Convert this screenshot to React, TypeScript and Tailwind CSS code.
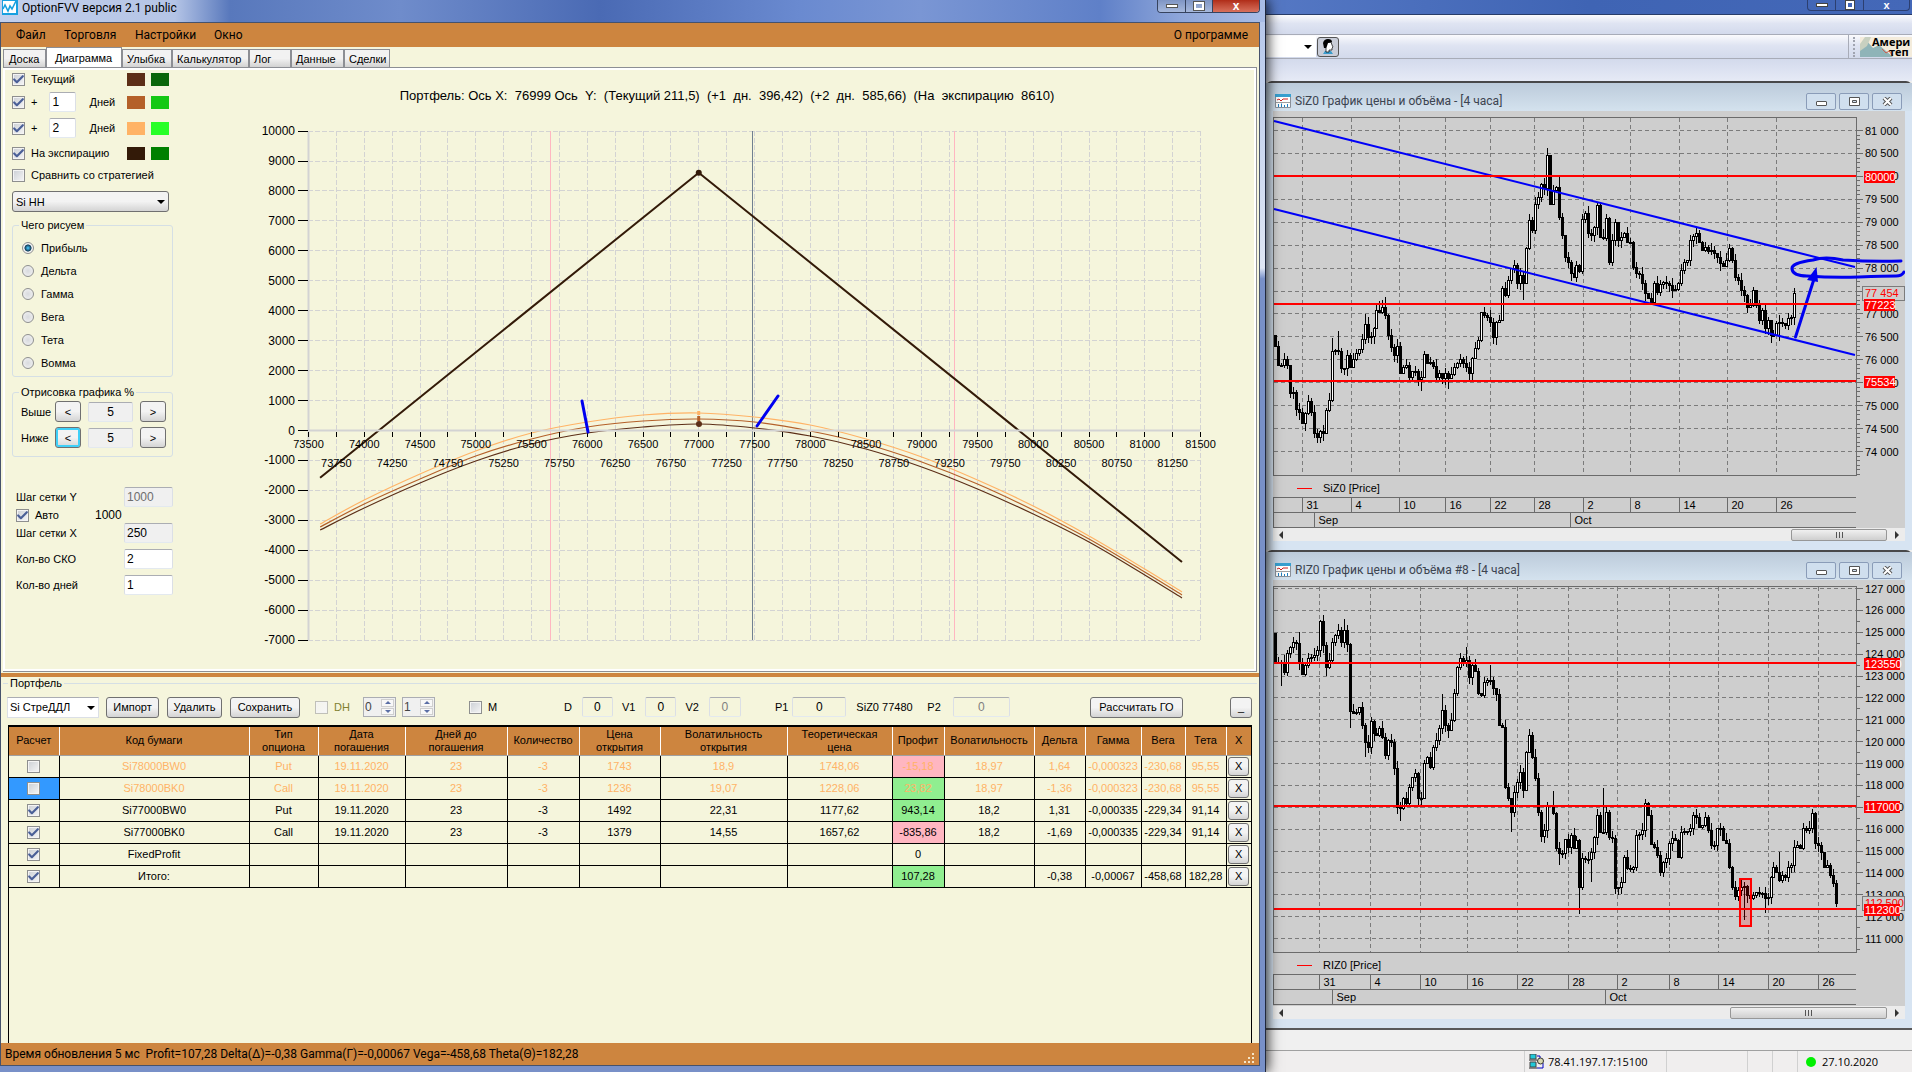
import { Check } from 'lucide-react';
import clsx from 'clsx';

const beige = 'bg-[#f5f5dc]';
const winButton =
  'border border-[#707070] rounded-[3px] bg-linear-to-b from-[#f3f3f3] from-50% to-[#d4d4d4] flex items-center justify-center';
const field = 'border border-t-[#abadb3] border-x-[#dbdfe6] border-b-[#e3e9ef] rounded-[2px] h-5 min-w-0';

/* ---------- small controls ---------- */

interface TickProps {
  label: string;
  checked?: boolean;
  disabled?: boolean;
  hideLabel?: boolean;
  className?: string;
}

function Tick({ label, checked = false, disabled = false, hideLabel = false, className }: TickProps) {
  return (
    <label className={clsx('flex items-center gap-1.5 whitespace-nowrap', className)}>
      <span className="relative block w-[13px] h-[13px] shrink-0">
        <input
          type="checkbox"
          aria-label={hideLabel ? label : undefined}
          defaultChecked={checked}
          disabled={disabled}
          className="peer block appearance-none w-[13px] h-[13px] border border-[#8e8f8f] bg-linear-to-br from-[#cbcfd5] to-[#f6f6f6] disabled:border-[#c0c0b8] disabled:from-[#f4f4ea] shadow-[inset_0_0_0_1px_#f4f4f4]"
        />
        <Check className="hidden peer-checked:block absolute inset-0 w-[13px] h-[13px] text-[#4a5f97] pointer-events-none" strokeWidth={4} />
      </span>
      {!hideLabel && <span>{label}</span>}
    </label>
  );
}

function Swatches({ a, b }: { a: string; b: string }) {
  return (
    <span className="ml-auto flex gap-1.5">
      <span className={clsx('w-[18px] h-[13px]', a)} />
      <span className={clsx('w-[18px] h-[13px]', b)} />
    </span>
  );
}

function Arrow({ className }: { className?: string }) {
  return (
    <svg viewBox="0 0 8 4" className={clsx('w-2 h-1 pointer-events-none', className)}>
      <path d="M0 0h8L4 4z" fill="currentColor" />
    </svg>
  );
}

function Spin({ value, label }: { value: string; label: string }) {
  return (
    <div className="flex w-[33px] h-5 border border-[#abadb3] bg-[#f0f0f0]">
      <input aria-label={label} defaultValue={value} className="w-4 pl-px bg-transparent text-xs text-[#444]" />
      <div className="flex flex-col flex-1 gap-px p-px">
        <button type="button" aria-label="+" className="flex-1 flex items-center justify-center bg-[#f8f8f8] border border-[#cfcfcf]">
          <Arrow className="w-1.5 h-[3px] rotate-180 text-[#5a6ea5]" />
        </button>
        <button type="button" aria-label="-" className="flex-1 flex items-center justify-center bg-[#f8f8f8] border border-[#cfcfcf]">
          <Arrow className="w-1.5 h-[3px] text-[#5a6ea5]" />
        </button>
      </div>
    </div>
  );
}

/* ---------- profit diagram ---------- */

const px = (price: number) => 128.5 + (price - 73500) * 0.1115;
const py = (value: number) => 360.5 - value * 0.02994;

const curveX = [73604, 74000, 74500, 75000, 75500, 76000, 76500, 77000, 77500, 78000, 78500, 79000, 79500, 80000, 80500, 81000, 81334];
const curves = [
  { color: '#ffb366', ys: [454, 430, 404, 381, 363, 352, 345, 343, 347, 355, 369, 387, 410, 436, 466, 499, 522] },
  { color: '#b46029', ys: [457, 434, 409, 386, 369, 357, 351, 349, 352, 361, 374, 392, 414, 440, 469, 502, 525] },
  { color: '#5c2e17', ys: [460, 438, 413, 391, 374, 363, 357, 354, 358, 366, 379, 397, 419, 444, 472, 505, 528] },
];

function smooth(ys: number[]) {
  const p = curveX.map((x, i) => [px(x), ys[i]]);
  let d = `M${p[0][0]} ${p[0][1]}`;
  for (let i = 0; i < p.length - 1; i++) {
    const a = p[Math.max(i - 1, 0)];
    const b = p[i];
    const c = p[i + 1];
    const e = p[Math.min(i + 2, p.length - 1)];
    d += ` C${b[0] + (c[0] - a[0]) / 6} ${b[1] + (c[1] - a[1]) / 6} ${c[0] - (e[0] - b[0]) / 6} ${c[1] - (e[1] - b[1]) / 6} ${c[0]} ${c[1]}`;
  }
  return d;
}

function ProfitDiagram() {
  const prices = Array.from({ length: 33 }, (_, i) => 73500 + i * 250);
  const values = Array.from({ length: 18 }, (_, i) => 10000 - i * 1000);

  return (
    <svg viewBox="0 0 1074 599" className="flex-1 min-w-0 self-start font-['Liberation_Sans',sans-serif]">
      <text x="547" y="30" fontSize="13" textAnchor="middle" className="whitespace-pre">
        {'Портфель: Ось X:  76999 Ось  Y:  (Текущий 211,5)  (+1  дн.  396,42)  (+2  дн.  585,66)  (На  экспирацию  8610)'}
      </text>
      <g stroke="#d3d3d3" strokeDasharray="5 2" shapeRendering="crispEdges">
        {prices.map((p) => (
          <path key={p} d={`M${px(p)} 61V570`} />
        ))}
        {values.map((v) => (
          <path key={v} d={`M128 ${py(v)}H1020`} />
        ))}
      </g>
      <path d="M370.5 61V570M774.5 61V570" stroke="#ffb6c1" shapeRendering="crispEdges" />
      <path d="M572.5 61V570" stroke="#708090" shapeRendering="crispEdges" />
      {curves.map((c) => (
        <path key={c.color} d={smooth(c.ys)} fill="none" stroke={c.color} strokeWidth="1.2" />
      ))}
      <path
        d={`M${px(73604)} ${py(-1577)}L${px(77000)} ${py(8610)}L${px(81334)} ${py(-4390)}`}
        fill="none"
        stroke="#331a08"
        strokeWidth="2"
      />
      <path d="M128.5 61V570M128.5 360.5H1020" stroke="#d3d3d3" strokeWidth="2" />
      {values.map((v) => (
        <g key={v}>
          <path d={`M118 ${py(v)}h10`} stroke="#000" shapeRendering="crispEdges" />
          <text x="115" y={py(v) + 4} fontSize="12" textAnchor="end">{v}</text>
        </g>
      ))}
      {prices.map((p, i) => (
        <g key={p}>
          <path d={`M${px(p)} 362v5`} stroke="#000" shapeRendering="crispEdges" />
          <text x={px(p)} y={i % 2 ? 397 : 378} fontSize="11" textAnchor="middle">{p}</text>
        </g>
      ))}
      <circle cx={px(77000)} cy={py(8610)} r="3" fill="#331a08" />
      <path d="M518.7 341v4" stroke="#ffb366" strokeWidth="3" />
      <path d="M518.7 346v5" stroke="#b46029" strokeWidth="3" />
      <circle cx="519" cy="354" r="3" fill="#5c2e17" />
      <path d="M402 331L408 362M577 356L598 326" stroke="#0000f0" strokeWidth="3" strokeLinecap="round" />
    </svg>
  );
}

/* ---------- side panel ---------- */

function Group({ title, children, className }: { title: string; children: React.ReactNode; className?: string }) {
  return (
    <fieldset className={clsx('border border-[#d5dfe5] rounded-[3px] w-[161px]', className)}>
      <legend className="ml-1.5 px-0.5 leading-3">{title}</legend>
      {children}
    </fieldset>
  );
}

function SidePanel() {
  const greeks = ['Прибыль', 'Дельта', 'Гамма', 'Вега', 'Тета', 'Вомма'];

  return (
    <aside className="w-[175px] shrink-0 pl-[7px] flex flex-col">
      <div className="w-[157px] mt-0.5 flex items-center h-[14px]">
        <Tick label="Текущий" checked />
        <Swatches a="bg-[#5c2e17]" b="bg-[#0a660a]" />
      </div>
      <div className="w-[157px] mt-1.5 flex items-center h-5">
        <Tick label="+" checked />
        <input aria-label="Дней 1" defaultValue="1" className={clsx(field, 'w-[27px] ml-3 pl-0.5 bg-white text-xs')} />
        <span className="ml-[13px]">Дней</span>
        <Swatches a="bg-[#b46029]" b="bg-[#14c814]" />
      </div>
      <div className="w-[157px] mt-1.5 flex items-center h-5">
        <Tick label="+" checked />
        <input aria-label="Дней 2" defaultValue="2" className={clsx(field, 'w-[27px] ml-3 pl-0.5 bg-white text-xs')} />
        <span className="ml-[13px]">Дней</span>
        <Swatches a="bg-[#ffb366]" b="bg-[#28ff28]" />
      </div>
      <div className="w-[157px] mt-2 flex items-center h-[14px]">
        <Tick label="На экспирацию" checked />
        <Swatches a="bg-[#331a08]" b="bg-[#008000]" />
      </div>
      <Tick label="Сравнить со стратегией" className="mt-[7px] h-4 mb-2" />

      <div className="relative w-[157px]">
        <select aria-label="Стратегия" className={clsx(winButton, 'appearance-none block w-full h-[21px] pl-[3px]')}>
          <option>Si НН</option>
        </select>
        <Arrow className="absolute right-1 top-[9px]" />
      </div>

      <Group title="Чего рисуем" className="mt-[7px] pb-0.5">
        <div className="pl-[9px] pt-[5px]">
          {greeks.map((name, i) => (
            <label key={name} className="flex items-center gap-[7px] h-[23px]">
              <input
                type="radio"
                name="greek"
                defaultChecked={i === 0}
                className="appearance-none w-3 h-3 rounded-full border border-[#8e8f8f] bg-[radial-gradient(#d8dade,#f4f4f4)] checked:bg-[radial-gradient(#3fb0e0_10%,#123a55_45%,#f4f4f4_55%)]"
              />
              {name}
            </label>
          ))}
        </div>
      </Group>

      <Group title="Отрисовка графика %" className="mt-[9px]">
        {['Выше', 'Ниже'].map((name, i) => (
          <div key={name} className="flex items-center pl-2 pr-1.5 mt-[3px] mb-[5px] h-[21px] last:mb-2">
            <span className="w-[34px]">{name}</span>
            <button
              type="button"
              className={clsx(winButton, 'w-[26px] h-[21px]', i === 1 && 'border-[#2c8ac0] shadow-[inset_0_0_0_2px_#3fd0f8]')}
            >
              &lt;
            </button>
            <input aria-label={name} defaultValue="5" className={clsx(field, 'w-[45px] mx-[7px] text-center text-xs bg-[#f0f0f0]')} />
            <button type="button" className={clsx(winButton, 'w-[26px] h-[21px]')}>&gt;</button>
          </div>
        ))}
      </Group>

      <div className="w-[161px] pl-1 mt-[30px]">
        <label className="flex items-center justify-between h-5">
          Шаг сетки Y
          <input defaultValue="1000" disabled className={clsx(field, 'w-[49px] pl-0.5 text-xs bg-[#f0f0f0] text-[#6d6d6d]')} />
        </label>
        <div className="flex items-center h-4">
          <Tick label="Авто" checked />
          <span className="ml-9 text-xs">1000</span>
        </div>
        <label className="flex items-center justify-between h-5">
          Шаг сетки X
          <input defaultValue="250" className={clsx(field, 'w-[49px] pl-0.5 text-xs bg-[#f0f0f0]')} />
        </label>
        <label className="flex items-center justify-between h-5 mt-1.5">
          Кол-во СКО
          <input defaultValue="2" className={clsx(field, 'w-[49px] pl-0.5 text-xs bg-white')} />
        </label>
        <label className="flex items-center justify-between h-5 mt-1.5">
          Кол-во дней
          <input defaultValue="1" className={clsx(field, 'w-[49px] pl-0.5 text-xs bg-white')} />
        </label>
      </div>
    </aside>
  );
}

/* ---------- portfolio ---------- */

const columns = [
  { title: 'Расчет', width: 'w-[50px]' },
  { title: 'Код бумаги', width: '' },
  { title: 'Тип опциона', width: 'w-[69px]' },
  { title: 'Дата погашения', width: 'w-[87px]' },
  { title: 'Дней до погашения', width: 'w-[102px]' },
  { title: 'Количество', width: 'w-[72px]' },
  { title: 'Цена открытия', width: 'w-[81px]' },
  { title: 'Волатильность открытия', width: 'w-[127px]' },
  { title: 'Теоретическая цена', width: 'w-[105px]' },
  { title: 'Профит', width: 'w-[52px]' },
  { title: 'Волатильность', width: 'w-[90px]' },
  { title: 'Дельта', width: 'w-[51px]' },
  { title: 'Гамма', width: 'w-[56px]' },
  { title: 'Вега', width: 'w-[44px]' },
  { title: 'Тета', width: 'w-[41px]' },
  { title: 'X', width: 'w-[25px]' },
];

const rows = [
  { on: false, profit: 'bg-[#ffb6c1]', cells: ['Si78000BW0', 'Put', '19.11.2020', '23', '-3', '1743', '18,9', '1748,06', '-15,18', '18,97', '1,64', '-0,000323', '-230,68', '95,55'] },
  { on: false, profit: 'bg-[#90ee90]', cells: ['Si78000BK0', 'Call', '19.11.2020', '23', '-3', '1236', '19,07', '1228,06', '23,82', '18,97', '-1,36', '-0,000323', '-230,68', '95,55'] },
  { on: true, profit: 'bg-[#90ee90]', cells: ['Si77000BW0', 'Put', '19.11.2020', '23', '-3', '1492', '22,31', '1177,62', '943,14', '18,2', '1,31', '-0,000335', '-229,34', '91,14'] },
  { on: true, profit: 'bg-[#ffb6c1]', cells: ['Si77000BK0', 'Call', '19.11.2020', '23', '-3', '1379', '14,55', '1657,62', '-835,86', '18,2', '-1,69', '-0,000335', '-229,34', '91,14'] },
  { on: true, profit: '', cells: ['FixedProfit', '', '', '', '', '', '', '', '0', '', '', '', '', ''] },
  { on: true, profit: 'bg-[#90ee90]', cells: ['Итого:', '', '', '', '', '', '', '', '107,28', '', '-0,38', '-0,00067', '-458,68', '182,28'] },
];

function PortfolioTable() {
  return (
    <table className="w-full table-fixed border-collapse text-center">
      <thead>
        <tr className="h-7 bg-[#cd853f]">
          {columns.map((c) => (
            <th key={c.title} className={clsx(c.width, 'font-normal leading-[13px] px-1 border-r border-r-white border-b border-b-[#a0a0a0] last:border-r-0')}>
              {c.title}
            </th>
          ))}
        </tr>
      </thead>
      <tbody>
        {rows.map((row, r) => (
          <tr key={row.cells[0]} className={clsx('h-[22px]', !row.on && 'text-[#ffb366]')}>
            <td className={clsx('border-r border-b border-black', r === 1 && 'bg-[#3399ff]')}>
              <Tick label={`Расчет ${row.cells[0]}`} hideLabel checked={row.on} className="justify-center" />
            </td>
            {row.cells.map((cell, i) => (
              <td key={i} className={clsx('border-r border-b border-black whitespace-nowrap', i === 8 && row.profit)}>
                {cell}
              </td>
            ))}
            <td className="border-b border-black text-black">
              <button type="button" className={clsx(winButton, 'w-[21px] h-[19px] mx-auto')}>X</button>
            </td>
          </tr>
        ))}
      </tbody>
    </table>
  );
}

interface NumBoxProps {
  label: string;
  value: string;
  width: string;
  gap?: string;
  disabled?: boolean;
  className?: string;
}

function NumBox({ label, value, width, gap = 'ml-2.5', disabled = false, className }: NumBoxProps) {
  return (
    <label className={clsx('flex items-center', className)}>
      {label}
      <input
        defaultValue={value}
        disabled={disabled}
        className={clsx(field, width, gap, beige, 'text-center text-xs', disabled && 'border-[#b4b4b4] text-[#808080]')}
      />
    </label>
  );
}

function Portfolio() {
  return (
    <fieldset className="flex-1 flex flex-col min-w-0 mx-0.5 border-t border-[#d5dfe5]">
      <legend className="ml-[5px] px-0.5 leading-3">Портфель</legend>
      <div className="flex items-center h-9 pl-1 pr-[5px] whitespace-nowrap">
        <div className="relative w-[92px]">
          <select aria-label="Портфель" className="appearance-none block w-full h-[21px] pl-0.5 bg-white border border-[#dbdfe6] border-t-[#abadb3]">
            <option>Si СтреДДЛ</option>
          </select>
          <Arrow className="absolute right-1 top-[9px]" />
        </div>
        <button type="button" className={clsx(winButton, 'ml-[7px] w-[53px] h-[21px]')}>Импорт</button>
        <button type="button" className={clsx(winButton, 'ml-2 w-[55px] h-[21px]')}>Удалить</button>
        <button type="button" className={clsx(winButton, 'ml-2 w-[70px] h-[21px]')}>Сохранить</button>
        <Tick label="DH" disabled className="ml-[15px] w-12 text-[#808030]" />
        <Spin label="DH 1" value="0" />
        <span className="w-1.5" />
        <Spin label="DH 2" value="1" />
        <Tick label="M" className="ml-[34px] w-[95px]" />
        <NumBox label="D" value="0" width="w-[31px]" />
        <NumBox label="V1" value="0" width="w-[31px]" className="ml-[9px]" />
        <NumBox label="V2" value="0" width="w-[32px]" disabled className="ml-[9px]" />
        <NumBox label="P1" value="0" width="w-[54px]" gap="ml-1" className="ml-[34px]" />
        <span className="ml-2.5 w-[71px]">SiZ0 77480</span>
        <NumBox label="P2" value="0" width="w-[57px]" disabled gap="ml-3" />
        <button type="button" className={clsx(winButton, 'ml-auto w-[93px] h-[21px]')}>Рассчитать ГО</button>
        <button type="button" className={clsx(winButton, 'ml-[47px] w-[22px] h-[21px]')}>_</button>
      </div>
      <div className="flex-1 mx-[5px] border border-b-0 border-black border-t-2">
        <PortfolioTable />
      </div>
    </fieldset>
  );
}

/* ---------- option window ---------- */

function OptionWindow() {
  const tabs = [
    { name: 'Доска', width: 'w-[43px]' },
    { name: 'Диаграмма', width: 'w-[76px]' },
    { name: 'Улыбка', width: 'w-[50px]' },
    { name: 'Калькулятор', width: 'w-[77px]' },
    { name: 'Лог', width: 'w-[42px]' },
    { name: 'Данные', width: 'w-[53px]' },
    { name: 'Сделки', width: 'w-[46px]' },
  ];

  return (
    <section className="relative z-10 flex flex-col min-w-0 bg-linear-to-b from-[#b4c6ea] via-[#dfe6f4] via-25% to-[#7890c8] to-26% border-r border-[#20283c] shadow-[2px_0_12px_rgba(0,0,0,0.8)]">
      <header className="flex h-[22px] shrink-0 bg-[linear-gradient(90deg,#c3d0ec_0,#b4c4e6_175px,#5878bc_230px,#6f8ccb_400px,#4a6ab4_600px,#6a8ad0_800px,#7a96d4_920px,#5f80c8_1100px,#8ea6da_1180px,#a9bde6)]">
        <svg viewBox="0 0 16 15" className="w-4 h-[15px] ml-0.5">
          <path d="M0 0H15V14H0z" fill="#fff" stroke="#18a0e0" strokeWidth="2" />
          <path d="M1 9l2-4 3 6 2-5 2 3 4-8" fill="none" stroke="#18a0e0" strokeWidth="1.6" />
        </svg>
        <h1 className="ml-1 leading-4 text-xs font-['Roboto',sans-serif]">OptionFVV версия 2.1 public</h1>
        <div className="ml-auto mr-[5px] flex h-[13px] w-[103px] border border-t-0 border-[#36435f] rounded-b-[4px] overflow-hidden">
          <button type="button" aria-label="Свернуть" className="w-7 border-r border-[#36435f] bg-linear-to-b from-[#7f95c4] to-[#a6b8dc] flex items-center justify-center">
            <span className="w-3 h-1 bg-white border border-[#555]" />
          </button>
          <button type="button" aria-label="Развернуть" className="w-[27px] border-r border-[#36435f] bg-linear-to-b from-[#7f95c4] to-[#a6b8dc] flex items-center justify-center">
            <span className="w-2.5 h-2 border-2 border-white outline outline-[#555]" />
          </button>
          <button type="button" aria-label="Закрыть" className="flex-1 bg-linear-to-b from-[#b02c18] to-[#d8705c] text-white text-xs font-bold leading-[10px]">
            x
          </button>
        </div>
      </header>

      <div className={clsx('flex-1 flex flex-col min-w-0 mr-[5px] mb-1.5 border border-[#46526c]', beige)}>
        <nav className="flex items-center h-6 px-[15px] bg-[#cd853f] text-xs font-['Roboto',sans-serif]">
          <button type="button" className="w-12 text-left">Файл</button>
          <button type="button" className="w-[71px] text-left">Торговля</button>
          <button type="button" className="w-[79px] text-left">Настройки</button>
          <button type="button">Окно</button>
          <button type="button" className="ml-auto -mr-1">О программе</button>
        </nav>

        <div className="flex items-end h-5 pl-0.5" role="tablist">
          {tabs.map((t, i) => (
            <button
              key={t.name}
              type="button"
              role="tab"
              aria-selected={i === 1}
              className={clsx(
                t.width,
                'border border-b-0 border-[#8c8e94] text-left',
                i === 0 ? 'pl-[5px]' : i > 1 && 'pl-1',
                i === 1 ? 'h-5 bg-white pl-2' : 'h-[18px] bg-linear-to-b from-[#f2f2f2] from-50% to-[#d2d2d2]'
              )}
            >
              {t.name}
            </button>
          ))}
        </div>
        <div className="mx-0.5 border border-[#8c8e94] border-l-0">
          <div className="flex border-2 border-white">
            <SidePanel />
            <ProfitDiagram />
          </div>
        </div>
        <div className="h-1 mt-px bg-[#cd853f] shrink-0" />
        <Portfolio />
        <footer className="flex items-center h-[22px] px-1 bg-[#cd853f] text-xs font-['Roboto',sans-serif]">
          <span className="whitespace-pre">
            {'Время обновления 5 мс  Profit=107,28 Delta(Δ)=-0,38 Gamma(Γ)=-0,00067 Vega=-458,68 Theta(Θ)=182,28'}
          </span>
          <svg viewBox="0 0 11 11" className="ml-auto mt-2 w-[11px] h-[11px]">
            <path d="M8 0h2v2H8zM4 4h2v2H4zM8 4h2v2H8zM0 8h2v2H0zM4 8h2v2H4zM8 8h2v2H8z" fill="#f5e6c8" />
          </svg>
        </footer>
      </div>
    </section>
  );
}

/* ---------- price charts ---------- */

// closes, in thirds of a pixel, shared vertical origin per instrument (see shift)
const siCloses = [
  1038, 1095, 1096, 1078, 1095, 1180, 1175, 1228, 1235, 1270, 1238, 1202, 1237, 1300, 1312, 1293, 1300, 1231, 1200, 1054, 1050, 1053, 1103,
  1105, 1065, 1100, 1078, 1058, 1047, 1018, 972, 1012, 1008, 983, 930, 935, 922, 945, 1005, 1040, 1065, 1038, 1118, 1100, 1095, 1130, 1112,
  1112, 1138, 1132, 1063, 1090, 1085, 1098, 1132, 1120, 1133, 1120, 1135, 1122, 1100, 1090, 1078, 1090, 1100, 1120, 1075, 1045, 1020, 935,
  945, 950, 965, 1012, 965, 960, 865, 885, 840, 805, 795, 850, 825, 850, 745, 660, 690, 612, 590, 552, 565, 465, 612, 570, 562, 650, 705,
  770, 785, 820, 830, 795, 812, 657, 640, 700, 705, 680, 615, 710, 715, 655, 785, 720, 665, 720, 710, 700, 725, 725, 800, 820, 822, 850,
  880, 895, 905, 850, 875, 852, 845, 850, 855, 870, 868, 850, 810, 785, 780, 720, 708, 700, 725, 750, 742, 752, 750, 760, 770, 790, 798,
  780, 745, 780, 830, 840, 870, 885, 920, 915, 870, 915, 960, 930, 985, 960, 1005, 1005, 970, 965, 970, 975, 955, 952, 880,
];

const riCloses = [
  340, 335, 335, 365, 310, 290, 275, 278, 335, 373, 345, 325, 320, 315, 300, 213, 285, 352, 330, 277, 255, 240, 275, 240, 283, 482, 490,
  487, 472, 525, 575, 590, 513, 550, 555, 535, 560, 615, 570, 575, 655, 770, 775, 745, 760, 710, 680, 670, 745, 745, 640, 620, 650, 590,
  570, 535, 480, 525, 540, 510, 430, 350, 325, 335, 330, 382, 345, 362, 430, 435, 395, 390, 390, 415, 432, 525, 530, 710, 745, 785, 725,
  695, 665, 720, 605, 555, 620, 683, 785, 858, 840, 765, 765, 790, 895, 910, 910, 868, 890, 855, 895, 870, 1010, 925, 928, 927, 905, 860,
  795, 845, 847, 785, 860, 865, 1015, 1010, 995, 920, 955, 958, 950, 855, 852, 840, 758, 795, 883, 890, 915, 965, 935, 925, 880, 865, 870,
  920, 845, 842, 842, 835, 795, 800, 832, 825, 800, 840, 885, 885, 835, 835, 870, 880, 950, 1010, 1038, 1020, 1012, 1008, 1035, 1045, 1035,
  1025, 1030, 1030, 1045, 1040, 980, 950, 965, 990, 975, 980, 950, 945, 890, 885, 895, 835, 840, 835, 790, 880, 885, 905, 950, 945, 975,
  1000, 1060,
];

interface CandlesProps {
  closes: number[];
  first: number;
  shift: number;
  lows?: Record<number, number>;
  highs?: Record<number, number>;
}

function Candles({ closes, first, shift, lows = {}, highs = {} }: CandlesProps) {
  return (
    <g shapeRendering="crispEdges" stroke="#000">
      {closes.map((close, i) => {
        const open = i === 0 ? first : closes[i - 1];
        const x = Math.round(2 + i * 2.985);
        const top = Math.round(Math.min(open, close) / 3 - shift);
        const bottom = Math.max(Math.round(Math.max(open, close) / 3 - shift), top + 1);
        const hi = (highs[i] ?? Math.min(open, close) - ((i * 37) % 23)) / 3 - shift;
        const lo = (lows[i] ?? Math.max(open, close) + ((i * 53) % 25)) / 3 - shift;
        return (
          <g key={i}>
            <path d={`M${x + 0.5} ${hi}V${lo}`} />
            <rect x={x - 0.5} y={top + 0.5} width="2" height={bottom - top} fill={close < open ? '#fff' : '#000'} />
          </g>
        );
      })}
    </g>
  );
}

interface Mark {
  x: number;
  text: string;
}

interface PriceChartProps {
  height: number;
  frameBottom: number;
  ticks: { y: number; text: string }[];
  minor: number;
  days: Mark[];
  months: Mark[];
  levels: { y: number; text: string; width: number }[];
  last: { y: number; text: string };
  legend: string;
  children: React.ReactNode;
}

function PriceChart({ height, frameBottom, ticks, minor, days, months, levels, last, legend, children }: PriceChartProps) {
  const minors: number[] = [];
  for (let y = ticks[0].y; y < frameBottom; y += minor) minors.push(y);
  const axis = frameBottom + 22;

  return (
    <svg viewBox={`0 0 632 ${height}`} fontSize="11" className="block w-full bg-[#cecece] font-['Liberation_Sans',sans-serif]">
      <g stroke="#7b7b7b" strokeDasharray="4 3" shapeRendering="crispEdges">
        {days.map((d) => (
          <path key={d.text} d={`M${d.x} 7V${frameBottom}`} />
        ))}
        {ticks.map((t) => (
          <path key={t.text} d={`M1 ${t.y}H583`} />
        ))}
      </g>
      <g stroke="#6b6b6b" fill="none" shapeRendering="crispEdges">
        <rect x="0.5" y="6.5" width="583" height={frameBottom - 6} />
        {minors.map((y) => (
          <path key={y} d={`M584 ${y}h3`} />
        ))}
        {ticks.map((t) => (
          <path key={t.text} d={`M584 ${t.y}h6`} />
        ))}
        <path d={`M0.5 ${axis + 0.5}V${axis + 30}M0 ${axis + 0.5}H583M0 ${axis + 15.5}H583M0 ${axis + 30.5}H583`} />
        {days.map((d) => (
          <path key={d.text} d={`M${d.x} ${axis}v15`} />
        ))}
        {months.map((m) => (
          <path key={m.text} d={`M${m.x} ${axis + 15}v15`} />
        ))}
      </g>
      {children}
      {ticks.map((t) => (
        <text key={t.text} x="592" y={t.y + 4}>{t.text}</text>
      ))}
      {days.map((d) => (
        <text key={d.text} x={d.x + 4} y={axis + 12}>{d.text}</text>
      ))}
      {months.map((m) => (
        <text key={m.text} x={m.x + 4} y={axis + 27}>{m.text}</text>
      ))}
      <rect x="589.5" y={last.y - 6.5} width="42" height="14" fill="#cecece" stroke="#7b7b7b" />
      <text x="592" y={last.y + 4} fill="#f00">{last.text}</text>
      {levels.map((l) => (
        <g key={l.text}>
          <path d={`M1 ${l.y}H583`} stroke="#f00" strokeWidth="2" shapeRendering="crispEdges" />
          <rect x="591" y={l.y - 5} width={l.width} height="12" fill="#f00" />
          <text x="592" y={l.y + 5} fill="#fff">{l.text}</text>
        </g>
      ))}
      <path d={`M24 ${axis - 8.5}h15`} stroke="#f00" />
      <text x="50" y={axis - 5}>{legend}</text>
    </svg>
  );
}

function ChartIcon() {
  return (
    <svg viewBox="0 0 16 14" className="w-4 h-3.5">
      <path d="M0.5 0.5h15v13h-15z" fill="#fff" stroke="#8a9099" />
      <path d="M0 0h16v3H0z" fill="#38a0d0" />
      <path d="M2 6l2-1 2 2 2-2h5" fill="none" stroke="#d02020" />
      <path d="M1 8.5h14" stroke="#a0a0a0" />
      <path d="M3.5 10v3M6.5 9.5v3.5M9.5 11v2M12.5 10v3" stroke="#2080c0" />
    </svg>
  );
}

function ChartWindow({ title, thumb, children }: { title: string; thumb: string; children: React.ReactNode }) {
  const box = 'w-[30px] h-[17px] flex items-center justify-center border border-[#8a9cb8] rounded-[2px] bg-[#d0dfee]';

  return (
    <section className="flex flex-col px-[7px] pb-[9px] border-t-2 border-[#48484a] rounded-t-md bg-[#d7e4f2]">
      <header className="-mx-[7px] px-[7px] flex items-center h-7 pt-2 bg-linear-to-b from-[#bccbdb] to-[#d4e2ee]">
        <span className="ml-0.5"><ChartIcon /></span>
        <h2 className="ml-1 text-xs text-[#3c4450] font-['Roboto',sans-serif]">{title}</h2>
        <div className="ml-auto flex gap-[3px] mr-[3px]">
          <button type="button" aria-label="Свернуть" className={box}>
            <span className="mt-1 w-[11px] h-[5px] bg-white border border-[#555] rounded-[1px]" />
          </button>
          <button type="button" aria-label="Развернуть" className={box}>
            <svg viewBox="0 0 11 9" className="w-[11px] h-[9px]">
              <path d="M0.5 0.5h10v8h-10zM3.5 3.5h4v2h-4z" fill="#fff" stroke="#555" fillRule="evenodd" />
            </svg>
          </button>
          <button type="button" aria-label="Закрыть" className={box}>
            <svg viewBox="0 0 11 9" className="w-[11px] h-[9px]">
              <path d="M2 1l7 7M9 1L2 8" stroke="#555" strokeWidth="4" />
              <path d="M2 1l7 7M9 1L2 8" stroke="#fff" strokeWidth="2" />
            </svg>
          </button>
        </div>
      </header>
      {children}
      <div className="flex items-center h-[13px] bg-[#ececec] pl-1 pr-1">
        <Arrow className="rotate-90 text-[#333]" />
        <div className={clsx(thumb, 'ml-auto mr-1.5 h-3 flex items-center justify-center gap-0.5 border border-[#979797] rounded-[2px] bg-linear-to-b from-[#f0f0f0] to-[#cfcfcf]')}>
          <span className="w-px h-1.5 bg-[#555]" />
          <span className="w-px h-1.5 bg-[#555]" />
          <span className="w-px h-1.5 bg-[#555]" />
        </div>
        <Arrow className="-rotate-90 text-[#333]" />
      </div>
    </section>
  );
}

const thousands = (n: number) => `${Math.floor(n / 1000)} ${String(n % 1000).padStart(3, '0')}`;

const siTicks = Array.from({ length: 15 }, (_, i) => ({ y: 19.5 + i * 22.93, text: thousands(81000 - i * 500) }));
const riTicks = Array.from({ length: 17 }, (_, i) => ({ y: 8.5 + i * 21.88, text: thousands(127000 - i * 1000) }));

const dayNames = ['31', '4', '10', '16', '22', '28', '2', '8', '14', '20', '26'];
const siDays = [29, 78, 126, 172, 217, 261, 310, 357, 406, 454, 503].map((x, i) => ({ x: x + 0.5, text: dayNames[i] }));
const riDays = [46, 97, 147, 194, 244, 295, 344, 396, 445, 495, 545].map((x, i) => ({ x: x + 0.5, text: dayNames[i] }));

/* ---------- terminal behind ---------- */

function Terminal() {
  const strip = 'bg-linear-to-b from-[#fbfbfd] via-[#dfe4f2] via-45% to-[#d3daec]';

  return (
    <section className="flex flex-col min-w-0 bg-[#f0f0f0]">
      <header className="flex justify-end h-[15px] bg-linear-to-r from-[#5578c4] via-[#3f64b4] to-[#4468b8] border-b border-[#283c68]">
        <div className="flex h-[11px] w-[103px] mr-0.5 border border-t-0 border-[#2c3f70] rounded-b-[4px]">
          <button type="button" aria-label="Свернуть" className="w-7 border-r border-[#2c3f70] flex items-center justify-center">
            <span className="w-3 h-1 bg-white border border-[#444]" />
          </button>
          <button type="button" aria-label="Восстановить" className="w-7 border-r border-[#2c3f70] flex items-center justify-center">
            <span className="w-2 h-2 border-2 border-white outline outline-[#444]" />
          </button>
          <button type="button" aria-label="Закрыть" className="flex-1 text-white font-bold leading-[9px]">x</button>
        </div>
      </header>
      <div className={clsx('h-[19px]', strip)} />
      <div className={clsx('flex items-center h-[25px] border-y border-[#a8acb8] overflow-hidden', strip)}>
        <div className="flex items-center justify-end w-[50px] h-[21px] pr-1 bg-white">
          <Arrow />
        </div>
        <button type="button" aria-label="Профиль" className="ml-px w-[22px] h-5 flex items-center justify-center rounded-[3px] border border-[#555] bg-[#c9cdd8]">
          <svg viewBox="0 0 14 15" className="w-3.5 h-[15px]">
            <path d="M2 15l2-3h6l2 3z" fill="#3a9ccc" />
            <path d="M5 4l5-1 1 3 1 2-1 1v2H8v2H5z" fill="#fff" stroke="#000" strokeWidth="0.7" />
            <path d="M2 4Q3 0 7 0q4 0 4 3L7 4 6 7 5 9 3 9z" fill="#000" />
          </svg>
        </button>
        <div className="ml-auto mr-1 h-full w-px bg-[#a8acb8]" />
        <div className="w-[3px] h-5 mr-1 border-l-2 border-dotted border-[#a0a4b0]" />
        <div className="relative w-[52px] h-5 overflow-hidden bg-[#f4ecdc] font-bold font-['Open_Sans',sans-serif] whitespace-nowrap">
          <svg viewBox="0 0 52 20" className="absolute inset-0 w-full h-full">
            <path d="M0 20V9l6-6 7 8 6-3 14 12z" fill="#8fb4b8" />
            <path d="M0 7l5-7h6l-4 9-7 5z" fill="#c8d0c0" />
            <path d="M22 12l4 4 3-2 4 5" fill="none" stroke="#d06050" />
          </svg>
          <p className="relative pl-3 leading-[10px]">Амери</p>
          <p className="relative pl-[29px] leading-[10px]">теп</p>
        </div>
      </div>
      <div className="h-[22px] bg-linear-to-b from-[#d3daec] to-[#e6eaf6]" />

      <ChartWindow title="SiZ0 График цены и объёма - [4 часа]" thumb="w-[96px]">
        <PriceChart
          height={417}
          frameBottom={364}
          ticks={siTicks}
          minor={4.586}
          days={siDays}
          months={[{ x: 41.5, text: 'Sep' }, { x: 297.5, text: 'Oct' }]}
          levels={[
            { y: 65, text: '80000', width: 31 },
            { y: 193, text: '77223', width: 31 },
            { y: 270, text: '75534', width: 31 },
          ]}
          last={{ y: 182, text: '77 454' }}
          legend="SiZ0 [Price]"
        >
          <Candles
            closes={siCloses}
            first={1005}
            shift={111}
            highs={{ 19: 1013, 21: 993, 30: 943, 35: 903, 37: 890, 91: 443, 95: 532, 108: 605, 174: 864 }}
            lows={{ 10: 1292, 15: 1330, 49: 1172, 58: 1167, 83: 900, 101: 845, 158: 938, 169: 1022 }}
          />
          <path d="M1 10L582 156M1 98L582 244" stroke="#0000f8" strokeWidth="2" />
          <path
            d="M628 150Q600 151 570 149Q552 145 540 149Q518 152 519 158Q520 165 534 165Q560 167 586 166T623 165Q629 165 631 161"
            fill="none"
            stroke="#0000f0"
            strokeWidth="3"
            strokeLinecap="round"
          />
          <path d="M522.5 226L541 168" stroke="#0000f0" strokeWidth="3" strokeLinecap="round" />
          <path d="M543.5 156L534 169l11 2z" fill="#0000f0" />
        </PriceChart>
      </ChartWindow>

      <ChartWindow title="RIZ0 График цены и объёма #8 - [4 часа]" thumb="w-[157px]">
        <PriceChart
          height={426}
          frameBottom={372}
          ticks={riTicks}
          minor={10.94}
          days={riDays}
          months={[{ x: 59.5, text: 'Sep' }, { x: 332.5, text: 'Oct' }]}
          levels={[
            { y: 83, text: '123550', width: 36 },
            { y: 226, text: '117000', width: 36 },
            { y: 329, text: '112300', width: 36 },
          ]}
          last={{ y: 323, text: '112 500' }}
          legend="RIZ0 [Price]"
        >
          <Candles
            closes={riCloses}
            first={250}
            shift={30}
            highs={{ 8: 245, 23: 207, 56: 432, 64: 292, 72: 345, 93: 723, 110: 715, 140: 785, 169: 905 }}
            lows={{ 2: 408, 17: 378, 25: 534, 30: 620, 42: 813, 79: 845, 95: 945, 102: 1092, 106: 995, 157: 1110, 164: 1088, 188: 1072 }}
          />
          <rect x="467" y="299" width="11" height="47" fill="#f00" fillOpacity="0.2" stroke="#f00" strokeWidth="2" />
        </PriceChart>
      </ChartWindow>

      <div className="flex-1 min-h-5 border-t-2 border-[#58585a] bg-[#f0f0f0]" />
      <footer className="flex items-center justify-end h-[22px] border-t border-[#a0a0a0] bg-[#f0eeee] text-[11px] font-['Open_Sans',sans-serif]">
        <div className="flex items-center gap-1 w-[142px] h-full pl-1 border-l border-[#d0d0d0]">
          <svg viewBox="0 0 15 15" className="w-[15px] h-[15px]">
            <path d="M1 0h6v5H1zM1 8h6v5H1z" fill="#20c8d8" stroke="#444" />
            <path d="M0 6h8M0 14h8" stroke="#666" strokeWidth="1.5" />
            <path d="M8 2h3v3M8 14h6V9" fill="none" stroke="#0000c0" />
            <circle cx="11.5" cy="7" r="3" fill="#d8d8b0" stroke="#333" />
          </svg>
          78.41.197.17:15100
        </div>
        <div className="w-[81px] h-full border-l border-[#d0d0d0]" />
        <div className="w-[25px] h-full border-l border-[#d0d0d0]" />
        <div className="w-[25px] h-full border-l border-[#d0d0d0]" />
        <div className="flex items-center gap-[6px] w-[115px] h-full pl-2 border-l border-[#d0d0d0]">
          <span className="w-2.5 h-2.5 rounded-full bg-[#00f000]" />
          27.10.2020
        </div>
      </footer>
    </section>
  );
}

export default function App() {
  return (
    <main className="grid grid-cols-[1266fr_646fr] min-h-screen overflow-hidden text-[11px] leading-[14px] text-black font-['Liberation_Sans',Arial,sans-serif]">
      <OptionWindow />
      <Terminal />
    </main>
  );
}
